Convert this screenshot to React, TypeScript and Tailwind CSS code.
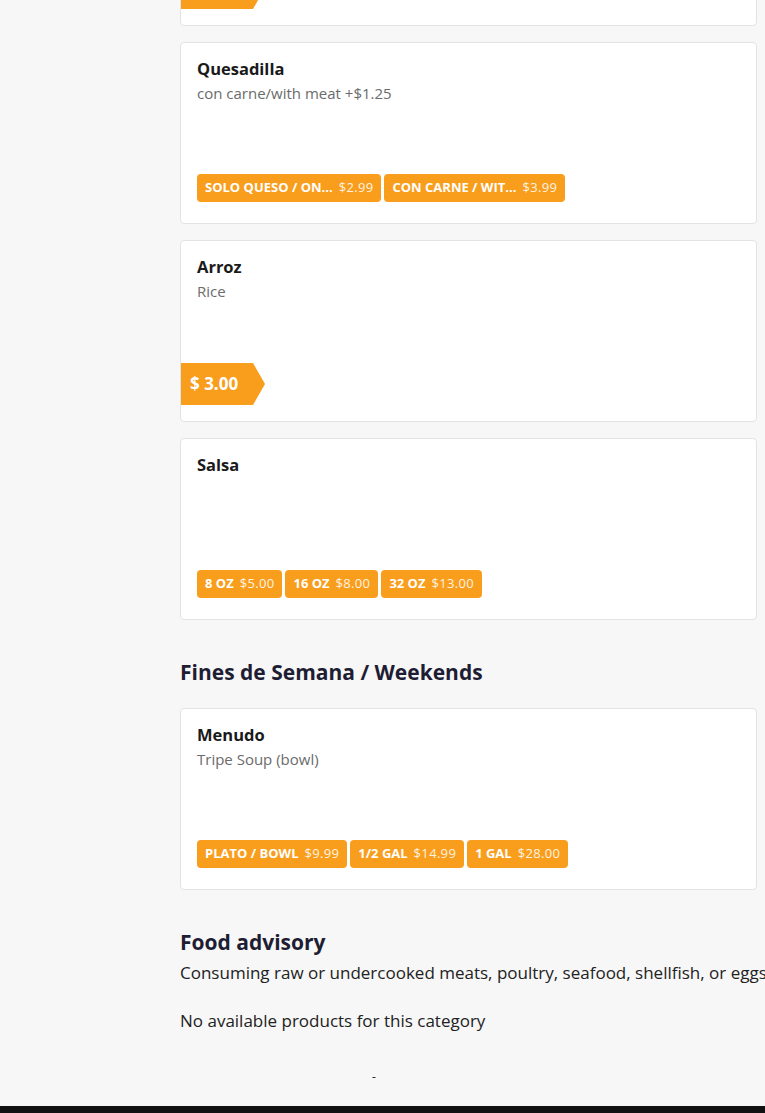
import React from "react";

type Option = { label: string; price: string };

const font = { fontFamily: '"Open Sans", "Liberation Sans", sans-serif' };

function PriceTag({ price }: { price?: string }) {
  return (
    <div className="-ml-4 flex h-[42px] w-[84px] items-center bg-[#f99d1c] pl-[9px] text-[17px] font-bold text-white [clip-path:polygon(0_0,72px_0,84px_50%,72px_100%,0_100%)]">
      {price && <>$ {price}</>}
    </div>
  );
}

function Options({ options }: { options: Option[] }) {
  return (
    <div className="mb-[5px] flex gap-[3px]">
      {options.map((o) => (
        <div
          key={o.label}
          className="flex h-7 items-center gap-[6px] rounded bg-[#f99d1c] px-2 text-[13px] text-white"
        >
          <span className="font-bold uppercase">{o.label}</span>
          <span className="tracking-wide text-[#fff3e0]">{o.price}</span>
        </div>
      ))}
    </div>
  );
}

function Card({
  title,
  subtitle,
  price,
  tag,
  options,
  className = "",
}: {
  title?: string;
  subtitle?: string;
  price?: string;
  tag?: boolean;
  options?: Option[];
  className?: string;
}) {
  return (
    <div
      className={`flex h-[182px] flex-col rounded border border-[#e3e3e3] bg-white px-4 pt-4 pb-4 ${className}`}
    >
      {title && <h3 className="text-[16.5px] leading-[20px] font-bold text-[#1a1a1a]">{title}</h3>}
      {subtitle && <p className="mt-[4px] text-[15px] leading-5 text-[#6b6b6b]">{subtitle}</p>}
      <div className="flex-1" />
      {tag && <PriceTag price={price} />}
      {options && <Options options={options} />}
    </div>
  );
}

export default function App() {
  return (
    <div className="relative h-[1113px] overflow-hidden bg-[#f7f7f7]" style={font}>
      <div className="flex">
        <div className="w-[180px] shrink-0" />
        <div className="w-[577px] shrink-0">
          <div className="flex flex-col gap-4">
            <Card tag className="-mt-[156px]" />
            <Card
              title="Quesadilla"
              subtitle="con carne/with meat +$1.25"
              options={[
                { label: "Solo queso / on...", price: "$2.99" },
                { label: "Con carne / wit...", price: "$3.99" },
              ]}
            />
            <Card title="Arroz" subtitle="Rice" tag price="3.00" />
            <Card
              title="Salsa"
              options={[
                { label: "8 oz", price: "$5.00" },
                { label: "16 oz", price: "$8.00" },
                { label: "32 oz", price: "$13.00" },
              ]}
            />
          </div>

          <h2 className="mt-[38px] mb-[22px] text-[21px] leading-[28px] font-bold text-[#1e1d33]">
            Fines de Semana / Weekends
          </h2>

          <Card
            title="Menudo"
            subtitle="Tripe Soup (bowl)"
            options={[
              { label: "Plato / Bowl", price: "$9.99" },
              { label: "1/2 gal", price: "$14.99" },
              { label: "1 gal", price: "$28.00" },
            ]}
          />

          <h2 className="mt-[38px] text-[21px] leading-[28px] font-bold text-[#1e1d33]">Food advisory</h2>
          <p className="mt-[5px] text-[17px] leading-6 whitespace-nowrap text-[#222]">
            Consuming raw or undercooked meats, poultry, seafood, shellfish, or eggs may increase your risk of foodborne illness.
          </p>
          <p className="mt-6 text-[17px] leading-6 text-[#222]">No available products for this category</p>
          <p className="mt-[36px] pl-[192px] text-xs text-[#222]">-</p>
        </div>
      </div>
      <div className="absolute right-0 bottom-0 left-0 h-[7px] bg-[#111]" />
    </div>
  );
}
